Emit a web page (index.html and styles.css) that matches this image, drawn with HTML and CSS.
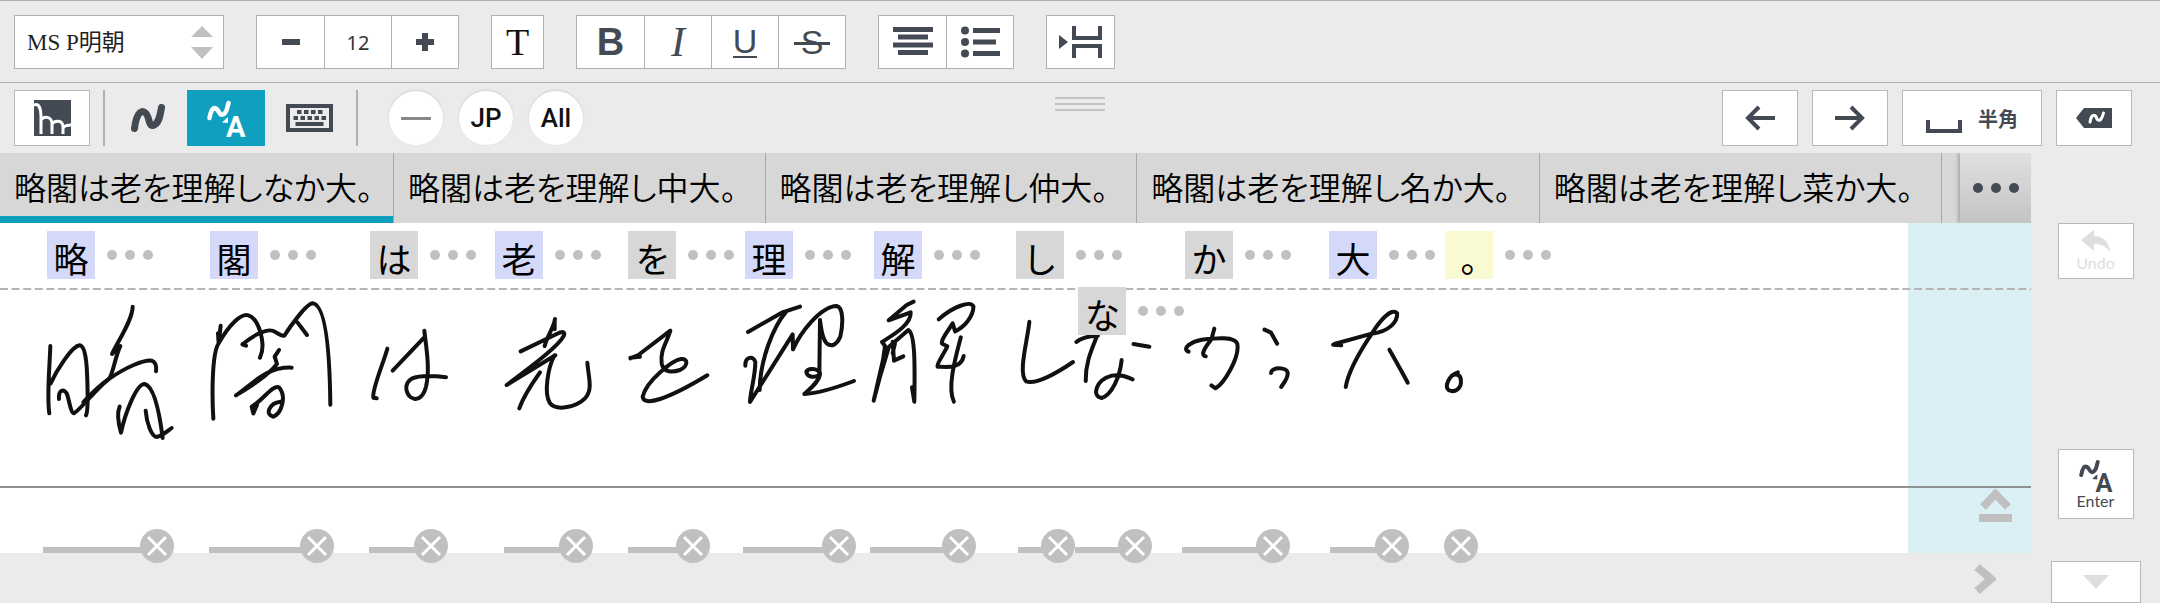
FILE: index.html
```html
<!DOCTYPE html>
<html lang="ja">
<head>
    <meta charset="UTF-8">
    <meta name="viewport" content="width=device-width, initial-scale=1.0">
    <title>Handwriting input</title>
    <link rel="stylesheet" href="styles.css">
</head>
<body>

<!-- shared icon shapes -->
<svg class="sprites" aria-hidden="true">
    <symbol id="convert" viewBox="0 0 39 37">
        <path d="M2.500 18C4 10 6 7 9 8.500C13 11 12 16 16 14.500C20 13 20 8 21.500 3" fill="none" stroke="currentColor" stroke-width="4.500" stroke-linecap="round"/>
        <path d="M21 17V23L15 22.500Z" fill="currentColor"/>
        <text class="convert-letter" x="19" y="37" fill="currentColor">A</text>
    </symbol>
</svg>

<div class="toolbar">
    <div class="font-select">
        <select aria-label="Font">
            <option>MS P明朝</option>
        </select>
        <svg width="22" height="34" viewBox="0 0 22 34"><path d="M11 1L22 12H0ZM0 22H22L11 34Z" fill="#c0c0c0"/></svg>
    </div>
    <div class="group">
        <button aria-label="Smaller"><svg width="20" height="20" viewBox="0 0 20 20"><path d="M1 10H19" stroke="#444a53" stroke-width="6"/></svg></button>
        <input class="size" type="text" value="12" aria-label="Font size">
        <button aria-label="Larger"><svg width="20" height="20" viewBox="0 0 20 20"><path d="M1 10H19M10 1V19" stroke="#444a53" stroke-width="6"/></svg></button>
    </div>
    <div class="group">
        <button class="text-color">T</button>
    </div>
    <div class="group">
        <button class="bold">B</button>
        <button class="italic">I</button>
        <button class="underline"><span>U</span></button>
        <button class="strike"><span>S</span></button>
    </div>
    <div class="group">
        <button aria-label="Center"><svg width="40" height="30" viewBox="0 0 40 30"><path d="M0 2.500H40M5 10H35M0 18H40M5 25.500H35" stroke="#444a53" stroke-width="5"/></svg></button>
        <button aria-label="List">
            <svg width="39" height="32" viewBox="0 0 39 32">
                <path d="M12 4.500H39M12 16H35M12 27.500H39" stroke="#444a53" stroke-width="5"/>
                <g fill="#444a53"><circle cx="4" cy="4.500" r="4"/><circle cx="4" cy="16" r="4"/><circle cx="4" cy="27.500" r="4"/></g>
            </svg>
        </button>
    </div>
    <div class="group">
        <button aria-label="Page break">
            <svg width="43" height="32" viewBox="0 0 43 32">
                <path d="M0 9V23L9 16Z" fill="#444a53"/>
                <path d="M15 0V12H41V0M15 32V20H41V32" fill="none" stroke="#444a53" stroke-width="4"/>
            </svg>
        </button>
    </div>
</div>

<div class="modebar">
    <button class="key" aria-label="Menu">
        <svg width="37" height="36" viewBox="0 0 37 36">
            <rect width="37" height="36" fill="#444a53"/>
            <path d="M0 5C5 3 7 8 7 18V34M7 20C10 16 17 16 18 23V34M18 24C21 20 28 20 29 26V34M29 28C31 25 34 25 37 25" fill="none" stroke="#fff" stroke-width="3"/>
        </svg>
    </button>
    <span class="divider"></span>
    <div class="modes">
        <button class="mode" aria-label="Draw">
            <svg width="34" height="28" viewBox="0 0 34 28"><path d="M3.500 24.500C5 12 9 5 14 8.500C19 12 17 22 22 21.500C28 20 29 12 30.500 3.500" fill="none" stroke="#444a53" stroke-width="7" stroke-linecap="round"/></svg>
        </button>
        <button class="mode active" aria-label="Convert"><svg width="39" height="37"><use href="#convert"/></svg></button>
        <button class="mode keyboard" aria-label="Keyboard">
            <svg width="47" height="28" viewBox="0 0 47 28">
                <rect x="2" y="2" width="43" height="24" fill="#ebebeb" stroke="#444a53" stroke-width="4"/>
                <path d="M11 8H37" stroke="#444a53" stroke-width="4" stroke-dasharray="4.500 2.500"/>
                <path d="M7.500 14H40.500" stroke="#444a53" stroke-width="4" stroke-dasharray="4.500 2.500"/>
                <path d="M9.500 20H37.500" stroke="#444a53" stroke-width="4"/>
            </svg>
        </button>
    </div>
    <span class="divider"></span>
    <div class="rounds">
        <button class="round" aria-label="None"><svg width="30" height="3"><path d="M0 1.500H30" stroke="#8a8a8a" stroke-width="3"/></svg></button>
        <button class="round">JP</button>
        <button class="round">All</button>
    </div>
    <span class="grip"></span>
    <div class="keys">
        <button class="key" aria-label="Left"><svg width="30" height="26" viewBox="0 0 30 26"><path d="M30 13H4M14 2L3 13L14 24" fill="none" stroke="#444a53" stroke-width="4"/></svg></button>
        <button class="key" aria-label="Right"><svg width="30" height="26" viewBox="0 0 30 26"><path d="M0 13H26M16 2L27 13L16 24" fill="none" stroke="#444a53" stroke-width="4"/></svg></button>
        <button class="key wide"><svg width="36" height="30" viewBox="0 0 36 30"><path d="M2 17V28H34V17" fill="none" stroke="#444a53" stroke-width="4"/></svg>半角</button>
        <button class="key" aria-label="Delete">
            <svg width="36" height="20" viewBox="0 0 36 20">
                <path d="M0 10L8 0H36V20H8Z" fill="#444a53"/>
                <path d="M14 14C15 7 18 6 20 8.500C21 13 24 13 25 11C26.500 9 27 7 27.500 5" fill="none" stroke="#fff" stroke-width="3" stroke-linecap="round"/>
            </svg>
        </button>
    </div>
</div>

<div class="main">
    <div class="writing">
        <div class="candidates">
            <button class="candidate selected">略閣は老を理解しなか大。</button>
            <button class="candidate">略閣は老を理解し中大。</button>
            <button class="candidate">略閣は老を理解し仲大。</button>
            <button class="candidate">略閣は老を理解し名か大。</button>
            <button class="candidate">略閣は老を理解し菜か大。</button>
            <button class="more" aria-label="More"><svg width="46" height="10"><g fill="#444a53"><circle cx="5" cy="5" r="5"/><circle cx="23" cy="5" r="5"/><circle cx="41" cy="5" r="5"/></g></svg></button>
        </div>

        <div class="canvas" id="canvas">
            <div class="next-area"></div>
            <svg class="guides" width="100%" height="330">
                <path d="M0 66H4000" stroke="#b5b5b5" stroke-width="2" stroke-dasharray="8 3.600"/>
                <path d="M0 264H4000" stroke="#8c9292" stroke-width="2"/>
            </svg>
            <svg class="ink" width="1908" height="330">
                <!-- 略 閣 は -->
                <g transform="translate(0 -13) scale(.33333)">
                    <path d="M151 408C149 470 140 560 148 610M152 520C170 480 215 410 238 406C262 405 262 500 263 560C263 590 262 610 258 616"/>
                    <path d="M177 567C175 540 190 535 200 550C208 570 212 610 222 610C240 600 290 535 325 508C380 470 430 450 455 452C466 456 470 468 468 484"/>
                    <path d="M398 290C398 330 350 400 336 432L361 408C345 440 338 500 325 508C300 525 265 560 250 576"/>
                    <path d="M359 590C350 610 355 640 363 668C375 610 410 520 434 522C465 530 480 620 488 684M437 602C440 640 455 680 470 681C490 676 500 665 515 654"/>
                    <path d="M662 347L656 400C690 340 725 310 745 316C775 325 800 400 780 443M656 400C635 430 636 560 640 626M656 400L654 370"/>
                    <path d="M728 403C760 375 800 355 820 363C835 370 845 380 853 377C870 350 920 280 938 280C985 285 990 490 991 584M893 338L921 375"/>
                    <path d="M728 403L738 407M837 420L824 440L831 462C800 500 750 530 708 556C760 520 800 470 875 473"/>
                    <path d="M760 610L755 590C790 570 820 520 838 533C860 560 845 610 820 620C795 615 805 580 842 575M760 610L771 585"/>
                    <path d="M1162 416C1150 460 1115 540 1120 563L1130 565M1178 482L1275 380L1273 362C1280 420 1290 480 1278 530C1270 560 1255 568 1245 567C1215 560 1210 520 1235 506C1260 495 1300 497 1338 502"/>
                </g>
                <!-- 老 を 理 解 -->
                <g transform="translate(460 -13) scale(.33333)">
                    <path d="M285 327C283 350 260 380 254 408M284 330L284 358M182 424L290 372C310 362 315 366 312 376C300 405 220 465 140 525L286 436M240 487C220 515 190 560 178 595"/>
                    <path d="M283 437C265 470 250 550 270 580C290 605 350 590 375 565C400 540 385 500 382 458"/>
                    <path d="M511 445L535 435L631 362C620 400 600 420 605 460C610 490 640 487 660 480C685 468 685 445 663 447C640 450 560 510 548 560C550 590 620 570 742 496M511 443L540 440"/>
                    <path d="M864 366L965 308L1020 290M977 307C940 350 900 450 899 540M856 467C855 440 880 435 886 456C886 500 870 550 870 576L998 373L999 418C1020 370 1080 290 1130 288C1150 292 1150 340 1141 380C1130 405 1115 412 1100 400C1085 385 1083 350 1080 330L1078 495"/>
                    <path d="M1078 495C1060 505 1040 500 1039 485C1045 472 1075 475 1080 490C1080 515 1045 540 1033 552C1080 550 1150 525 1182 513"/>
                    <path d="M1361 275L1340 285L1286 331L1352 307C1355 345 1290 380 1266 396L1275 408L1269 450L1241 572L1260 500L1287 410L1345 360C1365 370 1365 460 1363 575L1356 532M1298 395L1302 452L1330 439M1305 400L1298 430"/>
                </g>
                <!-- し な か 大 。 -->
                <g transform="translate(920 -13) scale(.40816 .33333)">
                    <path d="M46 328C80 290 125 270 131 290C130 320 110 350 86 364L80 340C70 360 50 390 54 401L67 409C60 430 40 460 43 470C60 470 100 480 107 438M100 382C90 430 65 530 83 575"/>
                    <path d="M268 335C262 400 240 490 260 514C285 525 340 485 375 456"/>
                    <path d="M383 396C395 383 410 378 436 377M434 377C420 420 405 460 406 513M523 402L562 410M494 450C490 500 470 555 445 564C420 560 430 510 470 497C490 492 505 500 521 508"/>
                    <path d="M658 425C640 415 665 395 690 389C730 383 770 380 777 400C785 440 745 520 724 535L714 526M721 356L714 388C700 410 685 435 700 439M844 359L860 368L875 401M860 489C860 470 900 470 901 490C900 510 890 520 885 531"/>
                    <path d="M1012 404L1032 406M1015 402L1107 371C1150 365 1170 335 1169 310C1155 290 1125 335 1107 371C1080 420 1050 480 1043 531M1150 419C1165 450 1180 485 1195 518M1318 487C1295 495 1285 530 1295 540C1310 550 1328 535 1325 510C1325 495 1315 490 1303 497"/>
                </g>
            </svg>
            <button class="line-up" aria-label="Line up"><svg width="33" height="33" viewBox="0 0 33 33"><path d="M4 18L16.500 5L29 18" fill="none" stroke="#c0c0c0" stroke-width="8"/><path d="M0 29H33" stroke="#c0c0c0" stroke-width="8"/></svg></button>
        </div>

        <div class="footer">
            <button aria-label="Scroll right"><svg width="22" height="30" viewBox="0 0 22 30"><path d="M3 3L17 15L3 27" fill="none" stroke="#c0c0c0" stroke-width="8"/></svg></button>
        </div>
    </div>

    <div class="side">
        <button class="key undo" disabled>
            <svg width="30" height="24" viewBox="0 0 30 24"><path d="M0 10L13 0V6C24 6 28 14 29 22C24 15 19 14 13 14V21Z" fill="#dedede"/></svg>
            Undo
        </button>
        <button class="key enter"><svg width="34" height="33"><use href="#convert"/></svg>Enter</button>
        <button class="key collapse" aria-label="Collapse"><svg width="26" height="14" viewBox="0 0 26 14"><path d="M0 0H26L13 14Z" fill="#dedede"/></svg></button>
    </div>
</div>

<script>
    const canvas = document.getElementById('canvas');

    // recognised characters: x of the box on the canvas
    const chars = [
        { text: '略', x: 47, type: 'kanji' },
        { text: '閣', x: 210, type: 'kanji' },
        { text: 'は', x: 370, type: 'kana' },
        { text: '老', x: 495, type: 'kanji' },
        { text: 'を', x: 628, type: 'kana' },
        { text: '理', x: 745, type: 'kanji' },
        { text: '解', x: 874, type: 'kanji' },
        { text: 'し', x: 1016, type: 'kana' },
        { text: 'な', x: 1078, type: 'kana lower' },
        { text: 'か', x: 1185, type: 'kana' },
        { text: '大', x: 1329, type: 'kanji' },
        { text: '。', x: 1445, type: 'mark' }
    ];

    // strokes belonging to each character: start of the bar, centre of its delete button
    const segments = [
        [43, 157], [209, 317], [369, 431], [504, 576], [628, 693], [743, 839],
        [870, 959], [1018, 1058], [1075, 1135], [1182, 1273], [1330, 1392], [1461, 1461]
    ];

    chars.forEach(function (c) {
        const button = document.createElement('button');
        button.className = 'char ' + c.type;
        button.style.left = c.x + 'px';
        button.innerHTML = '<span class="box">' + c.text + '</span><i></i><i></i><i></i>';
        canvas.appendChild(button);
    });

    segments.forEach(function (s) {
        const segment = document.createElement('div');
        segment.className = 'segment';
        segment.style.left = s[0] + 'px';
        segment.style.width = (s[1] - s[0]) + 'px';
        segment.innerHTML = '<button aria-label="Delete"><svg width="34" height="34" viewBox="0 0 34 34">' +
            '<path d="M8 8L26 26M26 8L8 26" stroke="#fff" stroke-width="3"/></svg></button>';
        canvas.appendChild(segment);
    });
</script>

</body>
</html>
```

FILE: styles.css
```css
* {
    box-sizing: border-box;
}

body {
    margin: 0;
    background-color: #ebebeb;
    color: #444a53;
    font-family: "Noto Sans", "Noto Sans CJK JP", sans-serif;
}

button {
    display: flex;
    justify-content: center;
    align-items: center;
    margin: 0;
    padding: 0;
    border: none;
    background: none;
    color: inherit;
    font-family: inherit;
    cursor: pointer;
}

svg {
    display: block;
}

.sprites {
    position: absolute;
    width: 0;
    height: 0;
}

.convert-letter {
    font-family: Roboto, sans-serif;
    font-size: 29px;
    font-weight: 700;
}

/* formatting row */
.toolbar {
    display: flex;
    gap: 32px;
    padding: 14px 14px 13px;
    border-top: 1px solid #b0b0b0;
    border-bottom: 1px solid #b0b0b0;
}

.font-select {
    position: relative;
    width: 210px;
}

.font-select select {
    width: 100%;
    height: 54px;
    padding: 0 12px;
    border: 1px solid #b0b0b0;
    border-radius: 0;
    background-color: #fff;
    color: #222;
    font-family: "Liberation Serif", "Noto Sans CJK JP", serif;
    font-size: 23px;
    appearance: none;
}

.font-select svg {
    position: absolute;
    top: 10px;
    right: 11px;
    pointer-events: none;
}

.group {
    display: flex;
    height: 54px;
    border: 1px solid #b0b0b0;
    background-color: #fff;
}

.group > * {
    width: 67px;
}

.group > * + * {
    border-left: 1px solid #b0b0b0;
}

.size {
    padding: 0;
    border-top: none;
    border-right: none;
    border-bottom: none;
    color: #333;
    font-family: "Noto Sans", sans-serif;
    font-size: 20px;
    text-align: center;
}

.group .text-color {
    width: 51px;
    color: #111;
    font-family: "Liberation Serif", serif;
    font-size: 38px;
}

.bold {
    font-family: "Liberation Sans", sans-serif;
    font-size: 38px;
    font-weight: 700;
}

.italic {
    font-family: "Liberation Serif", serif;
    font-size: 42px;
    font-style: italic;
}

.underline,
.strike {
    font-family: "Liberation Sans", sans-serif;
    font-size: 34px;
}

.underline span {
    line-height: 30px;
    border-bottom: 2px solid #444a53;
}

.strike span {
    position: relative;
}

.strike span::after {
    content: "";
    position: absolute;
    top: 50%;
    left: -7px;
    right: -7px;
    height: 3px;
    background-color: #444a53;
}

/* input mode row */
.modebar {
    position: relative;
    display: flex;
    align-items: center;
    height: 70px;
    padding: 0 28px 0 14px;
}

.key {
    width: 76px;
    height: 56px;
    border: 1px solid #b8b8b8;
    background-color: #fff;
}

.divider {
    width: 2px;
    height: 56px;
    margin-left: 13px;
    background-color: #b0b0b0;
}

.modes {
    display: flex;
    margin-left: 4px;
}

.mode {
    width: 78px;
    height: 56px;
}

.mode.active {
    background-color: #0ea0be;
    color: #fff;
}

.mode.keyboard {
    padding-left: 10px;
}

.rounds {
    display: flex;
    gap: 16px;
    margin-left: 31px;
}

.round {
    width: 54px;
    height: 54px;
    border-radius: 50%;
    background-color: #fff;
    box-shadow: 0 -1px 2px #d0d0d0;
    color: #111;
    font-family: Roboto, sans-serif;
    font-size: 26px;
    font-weight: 500;
}

.grip {
    position: absolute;
    top: 14px;
    left: 50%;
    width: 50px;
    height: 14px;
    margin-left: -25px;
    border-top: 2px solid #c4c4c4;
    border-bottom: 2px solid #c4c4c4;
}

.grip::after {
    content: "";
    display: block;
    height: 2px;
    margin-top: 4px;
    background-color: #c4c4c4;
}

.keys {
    display: flex;
    gap: 14px;
    margin-left: auto;
}

.key.wide {
    gap: 16px;
    width: 140px;
    font-size: 20px;
    font-weight: 700;
}

/* candidates, canvas and side keys */
.main {
    display: flex;
}

.writing {
    flex: 1;
    min-width: 0;
}

.candidates {
    display: flex;
    height: 70px;
    background-color: #d7d7d7;
}

.candidate {
    padding: 0 28px 4px 14px;
    border-right: 1px solid #a8a8a8;
    color: #000;
    font-family: "Noto Sans CJK JP", sans-serif;
    font-size: 32px;
    font-weight: 350;
    font-feature-settings: "palt";
    white-space: nowrap;
}

.candidate.selected {
    padding-right: 20px;
    box-shadow: inset 0 -7px #0ea0be;
}

.more {
    flex-shrink: 0;
    width: 71px;
    margin-left: auto;
    background: linear-gradient(#e0e0e0, #c4c4c4);
    box-shadow: -2px 0 3px #a8a8a8;
    clip-path: inset(0 0 0 -8px);
}

.canvas {
    position: relative;
    height: 330px;
    background-color: #fff;
}

.next-area {
    position: absolute;
    top: 0;
    right: 0;
    width: 123px;
    height: 100%;
    background-color: #dbf0f5;
}

.guides,
.ink {
    position: absolute;
    top: 0;
    left: 0;
}

.ink path {
    fill: none;
    stroke: #111;
    stroke-width: 4px;
    stroke-linecap: round;
    stroke-linejoin: round;
    vector-effect: non-scaling-stroke;
}

.line-up {
    position: absolute;
    top: 266px;
    right: 19px;
}

.char {
    position: absolute;
    top: 8px;
    gap: 8px;
    color: #000;
}

.char.lower {
    top: 64px;
}

.box {
    width: 48px;
    height: 48px;
    margin-right: 4px;
    font-family: "Noto Sans CJK JP", sans-serif;
    font-size: 35px;
    line-height: 54px;
    text-align: center;
    font-feature-settings: "palt";
}

.kanji .box {
    background-color: #d5d9f9;
}

.kana .box {
    background-color: #d7d7d7;
}

.mark .box {
    background-color: #f9f9d2;
}

.char i {
    width: 10px;
    height: 10px;
    border-radius: 50%;
    background-color: #c0c0c0;
}

.segment {
    position: absolute;
    top: 324px;
    height: 6px;
    background-color: #c0c0c0;
}

.segment button {
    position: absolute;
    top: -18px;
    right: -17px;
    border-radius: 50%;
    background-color: #c0c0c0;
}

.footer {
    display: flex;
    justify-content: flex-end;
    padding: 11px 35px 9px;
}

.side {
    display: flex;
    flex-direction: column;
    align-items: center;
    width: 129px;
    padding-top: 70px;
}

.undo,
.enter {
    flex-direction: column;
    font-family: Lato, sans-serif;
    font-size: 16px;
    line-height: 18px;
}

.undo {
    margin-bottom: auto;
    color: #dedede;
}

.enter {
    height: 70px;
    margin-bottom: 42px;
}

.collapse {
    width: 90px;
    height: 42px;
}
```
